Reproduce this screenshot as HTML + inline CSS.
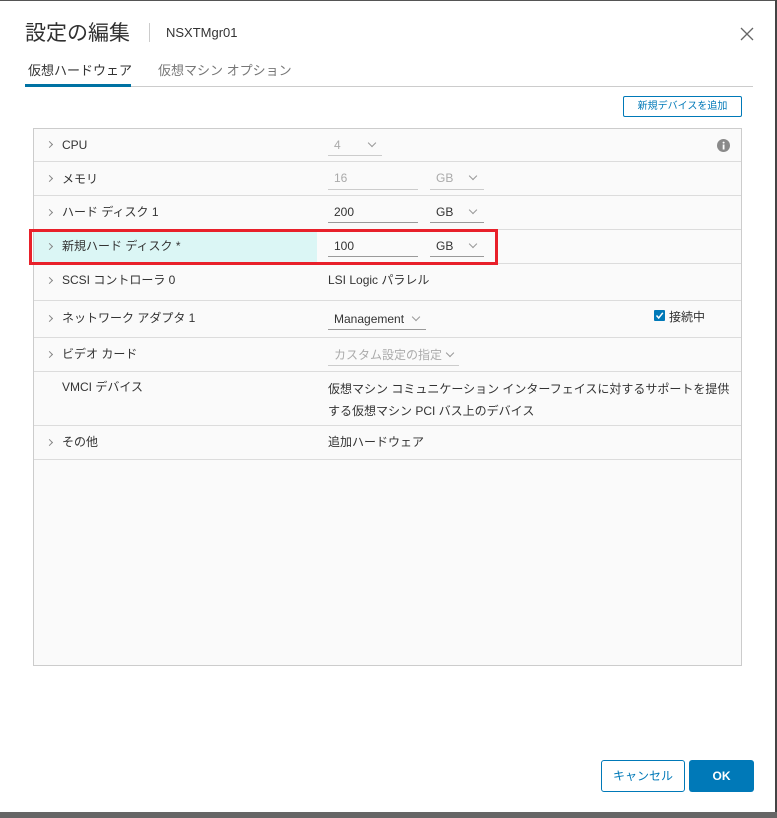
<!DOCTYPE html>
<html><head><meta charset="utf-8"><style>
*{margin:0;padding:0;box-sizing:border-box}
body{width:777px;height:818px;background:#fff;position:relative;overflow:hidden;font-family:"Liberation Sans","Noto Sans CJK JP",sans-serif;color:#333;font-size:12px;line-height:16px}
.a{position:absolute;white-space:nowrap;line-height:16px}
.row{position:absolute;left:34px;width:707px;border-bottom:1px solid #dcdcdc}
.chev{position:absolute;left:13px;width:5px;height:5px;border-right:1px solid #888;border-top:1px solid #888;transform:rotate(45deg)}
.lbl{position:absolute;left:28px;line-height:16px;white-space:nowrap}
.u{position:absolute;border-bottom:1px solid #9a9a9a}
.dis{color:#aaa}
.dis.u{border-color:#ccc}
.car{position:absolute;width:6px;height:6px;border-right:1px solid #999;border-bottom:1px solid #999;transform:rotate(45deg)}
</style></head><body>
<div class="a" style="left:0;top:0;width:777px;height:1px;background:#555"></div>
<div class="a" style="right:0;top:0;width:2px;height:818px;background:#444"></div>
<div class="a" style="left:0;top:812px;width:777px;height:6px;background:#666"></div>
<div class="a" style="left:25px;top:18px;font-size:21px;color:#313131;font-family:'Noto Sans CJK JP',sans-serif;line-height:28px">設定の編集</div>
<div class="a" style="left:149px;top:23px;width:1px;height:19px;background:#ccc"></div>
<div class="a" style="left:166px;top:25px;font-size:13px;color:#333">NSXTMgr01</div>
<svg class="a" style="left:740px;top:27px" width="14" height="14"><path d="M1 1L13 13M13 1L1 13" stroke="#666" stroke-width="1.3"/></svg>
<div class="a" style="left:28px;top:63px;font-size:13px;color:#333">仮想ハードウェア</div>
<div class="a" style="left:158px;top:63px;font-size:13px;color:#777">仮想マシン オプション</div>
<div class="a" style="left:25px;top:86px;width:728px;height:1px;background:#ccc"></div>
<div class="a" style="left:25px;top:84px;width:106px;height:3px;background:#0072a3"></div>
<div class="a" style="left:623px;top:96px;width:119px;height:21px;border:1px solid #0079b8;border-radius:2px;color:#0079b8;font-size:10px;text-align:center;line-height:19px">新規デバイスを追加</div>
<div class="a" style="left:33px;top:128px;width:709px;height:538px;border:1px solid #ccc;background:#fafafa"></div>

<div class="row" style="top:129px;height:33px"><span class="chev" style="top:13px"></span><span class="lbl" style="top:8px">CPU</span></div>
<div class="a dis" style="left:334px;top:137px">4</div><div class="car" style="left:369px;top:140px"></div><div class="u dis" style="left:328px;top:155px;width:54px"></div>
<svg class="a" style="left:717px;top:139px" width="13" height="13"><circle cx="6.5" cy="6.5" r="6.5" fill="#8a8a8a"/><rect x="5.7" y="5.5" width="1.8" height="5" fill="#fff"/><circle cx="6.6" cy="3.6" r="1" fill="#fff"/></svg>

<div class="row" style="top:162px;height:34px"><span class="chev" style="top:14px"></span><span class="lbl" style="top:9px">メモリ</span></div>
<div class="a dis" style="left:334px;top:170px">16</div><div class="u dis" style="left:328px;top:189px;width:90px"></div>
<div class="a dis" style="left:436px;top:170px">GB</div><div class="car" style="left:470px;top:173px"></div><div class="u dis" style="left:430px;top:189px;width:54px"></div>

<div class="row" style="top:196px;height:34px"><span class="chev" style="top:14px"></span><span class="lbl" style="top:8px">ハード ディスク 1</span></div>
<div class="a" style="left:334px;top:204px">200</div><div class="u" style="left:328px;top:222px;width:90px"></div>
<div class="a" style="left:436px;top:204px">GB</div><div class="car" style="left:470px;top:207px"></div><div class="u" style="left:430px;top:222px;width:54px"></div>

<div class="row" style="top:230px;height:34px"><div class="a" style="left:0;top:0;width:283px;height:33px;background:#dbf6f5"></div><span class="chev" style="top:14px"></span><span class="lbl" style="top:8px">新規ハード ディスク *</span></div>
<div class="a" style="left:334px;top:238px">100</div><div class="u" style="left:328px;top:256px;width:90px"></div>
<div class="a" style="left:436px;top:238px">GB</div><div class="car" style="left:470px;top:241px"></div><div class="u" style="left:430px;top:256px;width:54px"></div>
<div class="a" style="left:29px;top:229px;width:469px;height:36px;border:3px solid #e8202a"></div>

<div class="row" style="top:264px;height:37px"><span class="chev" style="top:14px"></span><span class="lbl" style="top:8px">SCSI コントローラ 0</span></div>
<div class="a" style="left:328px;top:272px">LSI Logic パラレル</div>

<div class="row" style="top:301px;height:37px"><span class="chev" style="top:15px"></span><span class="lbl" style="top:9px">ネットワーク アダプタ 1</span></div>
<div class="a" style="left:334px;top:311px">Management</div><div class="car" style="left:413px;top:314px"></div><div class="u" style="left:328px;top:329px;width:98px"></div>
<div class="a" style="left:654px;top:310px;width:11px;height:11px;background:#0079b8;border-radius:1px"></div>
<svg class="a" style="left:655px;top:311px" width="9" height="9"><path d="M1.5 4.5L3.7 7L7.8 1.8" stroke="#fff" stroke-width="1.5" fill="none"/></svg>
<div class="a" style="left:669px;top:309px">接続中</div>

<div class="row" style="top:338px;height:34px"><span class="chev" style="top:14px"></span><span class="lbl" style="top:8px">ビデオ カード</span></div>
<div class="a dis" style="left:334px;top:347px">カスタム設定の指定</div><div class="car" style="left:447px;top:350px"></div><div class="u dis" style="left:328px;top:365px;width:131px"></div>

<div class="row" style="top:372px;height:54px"><span class="lbl" style="top:7px">VMCI デバイス</span></div>
<div class="a" style="left:328px;top:378px;line-height:22px">仮想マシン コミュニケーション インターフェイスに対するサポートを提供<br>する仮想マシン PCI バス上のデバイス</div>

<div class="row" style="top:426px;height:34px"><span class="chev" style="top:14px"></span><span class="lbl" style="top:8px">その他</span></div>
<div class="a" style="left:328px;top:434px">追加ハードウェア</div>

<div class="a" style="left:601px;top:760px;width:84px;height:32px;border:1px solid #0079b8;border-radius:3px;color:#0079b8;text-align:center;line-height:30px;font-size:12px">キャンセル</div>
<div class="a" style="left:689px;top:760px;width:65px;height:32px;background:#0079b8;border-radius:3px;color:#fff;text-align:center;line-height:32px;font-size:12px;font-weight:bold">OK</div>
</body></html>
